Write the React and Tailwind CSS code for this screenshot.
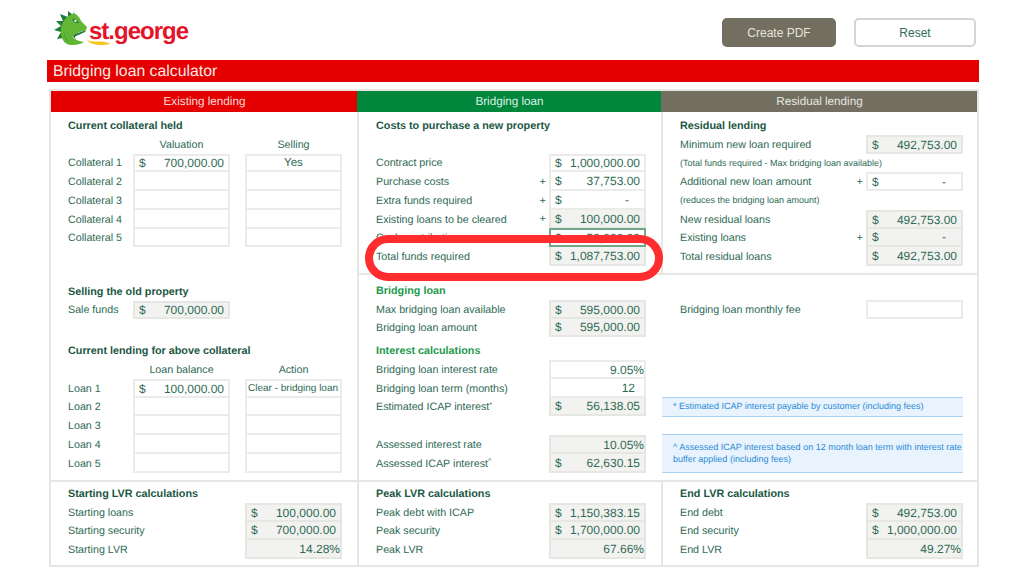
import React from "react";

function Cell({ kind = "calc", dollar, value, first, outlined, small, pct, center, dash, term }) {
	const bg = kind === "calc" ? "bg-[#f2f2f0] border-[#e6e6e3]" : "bg-white border-[#ebebe8]";
	return (
		<div
			className={`w-[97px] h-full shrink-0 flex items-center border-2 border-t-0 ${bg} ${first ? "border-t-2" : ""} ${outlined ? "relative !border-[#6fa88a] !border-t-2 h-[20px] -mt-px" : ""}`}
		>
			{dollar && <span className="pl-[4px] pt-[1px] text-[12px]">$</span>}
			{center ? (
				<span className={`flex-1 pt-[1px] whitespace-nowrap ${small ? "text-[10px] text-left pl-[1px]" : "text-[11.5px] text-center"}`}>{value}</span>
			) : (
				<span className={`flex-1 pt-[1px] text-right text-[12px] ${pct ? "pr-0" : dash ? "pr-[15px]" : term ? "pr-[9px]" : "pr-[4px]"}`}>{value}</span>
			)}
		</div>
	);
}

function Row({ label, plus, children }) {
	return (
		<div className="flex items-center h-[18.75px]">
			<div className="flex-1 pt-[1px] text-[10.7px] whitespace-nowrap">{label}</div>
			{plus && <span className="mr-[3px] pt-[1px] text-[11px]">+</span>}
			{children}
		</div>
	);
}

function Heading({ children, green }) {
	return (
		<div className={`h-[18.75px] pt-[1px] flex items-center text-[10.8px] font-bold whitespace-nowrap ${green ? "text-[#1e9a4c]" : "text-[#1b5743]"}`}>
			{children}
		</div>
	);
}

function LeftRow({ label, a, b, first }) {
	return (
		<div className="flex items-center h-[18.75px]">
			<div className="w-[65px] pt-[1px] text-[10.7px]">{label}</div>
			<Cell kind="input" first={first} dollar={!!a} value={a} />
			<div className="w-[15px]"></div>
			<Cell kind="input" first={first} value={b} center small={b && b.length > 5} />
		</div>
	);
}

function ColumnTitles({ a, b }) {
	return (
		<div className="flex h-[18.75px] pt-[1px] items-center text-[10.7px]">
			<div className="w-[65px]"></div>
			<div className="w-[97px] text-center">{a}</div>
			<div className="w-[15px]"></div>
			<div className="w-[97px] text-center">{b}</div>
		</div>
	);
}

function Logo() {
	return (
		<div className="relative flex items-start w-[140px] h-[40px]">
			<svg width="36" height="40" viewBox="0 0 36 40" className="shrink-0 -mt-[11px]">
				<path d="M21 0 L19 8 L14 4 L14 10 L6 7 L9 14 L2 14 L7 19 L0 23 L7 25 L3 32 L9 31 L11 36 L17 20 Z" fill="#1f7a3c" />
				<path d="M20 6 C24 8 26 11 27 14 L33 20 L32 23 C28 24 24 26 21 27 C18 28 18 31 21 32 C24 34 27 34 30 35 C26 38 17 39 13 37 C8 34 6 28 7 21 C8 14 13 9 20 6 Z" fill="#61b733" />
				<path d="M18 12 C21 11 24 13 25 16 C22 17 19 15 18 12 Z" fill="#2d8a3e" />
				<circle cx="21.5" cy="13.8" r="1.1" fill="#ffffff" />
				<path d="M21 27 C25 26 29 24 32 23 L31 25 C27 27 24 28 22 29 C20 30 21 31 22 32 C19 31 18 28 21 27 Z" fill="#1f7a3c" />
				<path d="M10 24 C10 30 13 35 19 36 C14 36 9 31 10 24 Z" fill="#2d8a3e" />
			</svg>
			<span className="-ml-[1px] -mt-[1px] text-[24px] leading-[30px] font-bold tracking-[-1px] text-[#e5132a]">st.george</span>
			<svg width="26" height="7" viewBox="0 0 26 7" className="absolute left-[32px] top-[20px]">
				<path d="M0 1 C6 6 14 1 25 6 C17 7 6 9 0 1 Z" fill="#f7c51e" />
			</svg>
		</div>
	);
}

export default function App() {
	return (
		<div className="relative w-[1024px] h-[576px] overflow-hidden bg-white text-[#2f6a55] font-['Liberation_Sans',Arial,sans-serif] [text-rendering:geometricPrecision]">
			<div className="flex items-start pl-[54px] pr-[48px] pt-[18px] h-[60px]">
				<Logo />
				<div className="ml-auto flex gap-[18px]">
					<button className="w-[114px] h-[29px] rounded-[5px] bg-[#726f61] text-[#e4e3dc] text-[12px]">Create PDF</button>
					<button className="w-[122px] h-[29px] rounded-[5px] bg-white border-2 border-[#d4d4d0] text-[12px]">Reset</button>
				</div>
			</div>

			<div className="ml-[47px] w-[932px] h-[22px] bg-[#e40000] text-[#fbe9e6] text-[15.8px] leading-[24px] pl-[6px]">
				Bridging loan calculator
			</div>

			<div className="ml-[49px] mt-[7px] w-[930px] h-[478px] border-2 border-[#e6e6e3] grid grid-cols-[306px_304px_316px] grid-rows-[21px_161px_207px_85px]">
				<div className="bg-[#e40000] text-[#f8dcd8] text-[11.7px] flex items-center justify-center pl-[1px]">Existing lending</div>
				<div className="bg-[#00873c] text-[#dff0e4] text-[11.7px] flex items-center justify-center pl-[1px]">Bridging loan</div>
				<div className="bg-[#726f61] text-[#e8e7e0] text-[11.7px] flex items-center justify-center pl-[1px]">Residual lending</div>

				{/* Existing lending, runs down past the divider of the other two columns */}
				<div className="row-span-2 pl-[17px] pr-[15px] pt-[4px]">
					<Heading>Current collateral held</Heading>
					<ColumnTitles a="Valuation" b="Selling" />
					<LeftRow first label="Collateral 1" a="700,000.00" b="Yes" />
					<LeftRow label="Collateral 2" />
					<LeftRow label="Collateral 3" />
					<LeftRow label="Collateral 4" />
					<LeftRow label="Collateral 5" />

					<div className="mt-[34.5px]">
						<Heading>Selling the old property</Heading>
					</div>
					<div className="flex items-center h-[18.75px]">
						<div className="w-[65px] pt-[1px] text-[10.7px]">Sale funds</div>
						<Cell first dollar value="700,000.00" />
					</div>

					<div className="mt-[22px]">
						<Heading>Current lending for above collateral</Heading>
					</div>
					<ColumnTitles a="Loan balance" b="Action" />
					<LeftRow first label="Loan 1" a="100,000.00" b="Clear - bridging loan" />
					<LeftRow label="Loan 2" />
					<LeftRow label="Loan 3" />
					<LeftRow label="Loan 4" />
					<LeftRow label="Loan 5" />
				</div>

				<div className="border-l-2 border-[#e6e6e3] pl-[17px] pr-[15px] pt-[4px]">
					<Heading>Costs to purchase a new property</Heading>
					<div className="h-[18.75px]"></div>
					<Row label="Contract price"><Cell kind="input" first dollar value="1,000,000.00" /></Row>
					<Row label="Purchase costs" plus><Cell kind="input" dollar value="37,753.00" /></Row>
					<Row label="Extra funds required" plus><Cell kind="input" dollar value="-" dash /></Row>
					<Row label="Existing loans to be cleared" plus><Cell dollar value="100,000.00" /></Row>
					<Row label="Cash contribution"><Cell kind="input" outlined dollar value="50,000.00" /></Row>
					<Row label="Total funds required"><Cell dollar value="1,087,753.00" /></Row>
				</div>

				<div className="border-l-2 border-[#e6e6e3] pl-[17px] pr-[14px] pt-[4px]">
					<Heading>Residual lending</Heading>
					<Row label="Minimum new loan required"><Cell first dollar value="492,753.00" /></Row>
					<div className="h-[18.75px] pt-[1px] flex items-center text-[9px] whitespace-nowrap">(Total funds required - Max bridging loan available)</div>
					<Row label="Additional new loan amount" plus><Cell kind="input" first dollar value="-" dash /></Row>
					<div className="h-[18.75px] pt-[1px] flex items-center text-[9px] whitespace-nowrap">(reduces the bridging loan amount)</div>
					<Row label="New residual loans"><Cell first dollar value="492,753.00" /></Row>
					<Row label="Existing loans" plus><Cell dollar value="-" dash /></Row>
					<Row label="Total residual loans"><Cell dollar value="492,753.00" /></Row>
				</div>

				<div className="border-l-2 border-t-2 border-[#e6e6e3] pl-[17px] pr-[15px] pt-[6px]">
					<Heading green>Bridging loan</Heading>
					<Row label="Max bridging loan available"><Cell first dollar value="595,000.00" /></Row>
					<Row label="Bridging loan amount"><Cell dollar value="595,000.00" /></Row>
					<div className="mt-[4px]">
						<Heading green>Interest calculations</Heading>
					</div>
					<Row label="Bridging loan interest rate"><Cell kind="input" first pct value="9.05%" /></Row>
					<Row label="Bridging loan term (months)"><Cell kind="input" term value="12" /></Row>
					<Row label={<>Estimated ICAP interest<sup className="text-[7px]">*</sup></>}><Cell dollar value="56,138.05" /></Row>
					<div className="h-[18.75px]"></div>
					<Row label="Assessed interest rate"><Cell first pct value="10.05%" /></Row>
					<Row label={<>Assessed ICAP interest<sup className="text-[7px]">^</sup></>}><Cell dollar value="62,630.15" /></Row>
				</div>

				<div className="border-t-2 border-[#e6e6e3] pr-[14px] pt-[6px]">
					<div className="h-[18.75px]"></div>
					<div className="pl-[19px]">
						<Row label="Bridging loan monthly fee"><Cell kind="input" first /></Row>
					</div>
					<div className="mt-[78px] ml-[1px] h-[20px] flex items-center pl-[11px] bg-[#e8f3fd] border-y border-[#a9d2f2] text-[#2a8bd8] text-[9px] whitespace-nowrap">
						* Estimated ICAP interest payable by customer (including fees)
					</div>
					<div className="mt-[17px] ml-[1px] h-[39px] flex items-center pl-[11px] bg-[#e8f3fd] border-y border-[#a9d2f2] text-[#2a8bd8] text-[9px] leading-[12px]">
						^ Assessed ICAP interest based on 12 month loan term with interest rate buffer applied (including fees)
					</div>
				</div>

				<div className="border-t-2 border-[#e6e6e3] pl-[17px] pr-[15px] pt-[2px]">
					<Heading>Starting LVR calculations</Heading>
					<Row label="Starting loans"><Cell first dollar value="100,000.00" /></Row>
					<Row label="Starting security"><Cell dollar value="700,000.00" /></Row>
					<Row label="Starting LVR"><Cell pct value="14.28%" /></Row>
				</div>

				<div className="border-l-2 border-t-2 border-[#e6e6e3] pl-[17px] pr-[15px] pt-[2px]">
					<Heading>Peak LVR calculations</Heading>
					<Row label="Peak debt with ICAP"><Cell first dollar value="1,150,383.15" /></Row>
					<Row label="Peak security"><Cell dollar value="1,700,000.00" /></Row>
					<Row label="Peak LVR"><Cell pct value="67.66%" /></Row>
				</div>

				<div className="border-l-2 border-t-2 border-[#e6e6e3] pl-[17px] pr-[14px] pt-[2px]">
					<Heading>End LVR calculations</Heading>
					<Row label="End debt"><Cell first dollar value="492,753.00" /></Row>
					<Row label="End security"><Cell dollar value="1,000,000.00" /></Row>
					<Row label="End LVR"><Cell pct value="49.27%" /></Row>
				</div>
			</div>

			{/* hand-drawn highlight over the total funds row */}
			<div className="absolute left-[365px] top-[235px] w-[298px] h-[46px] rounded-full border-[8px] border-[#ff2d2d]"></div>
		</div>
	);
}
